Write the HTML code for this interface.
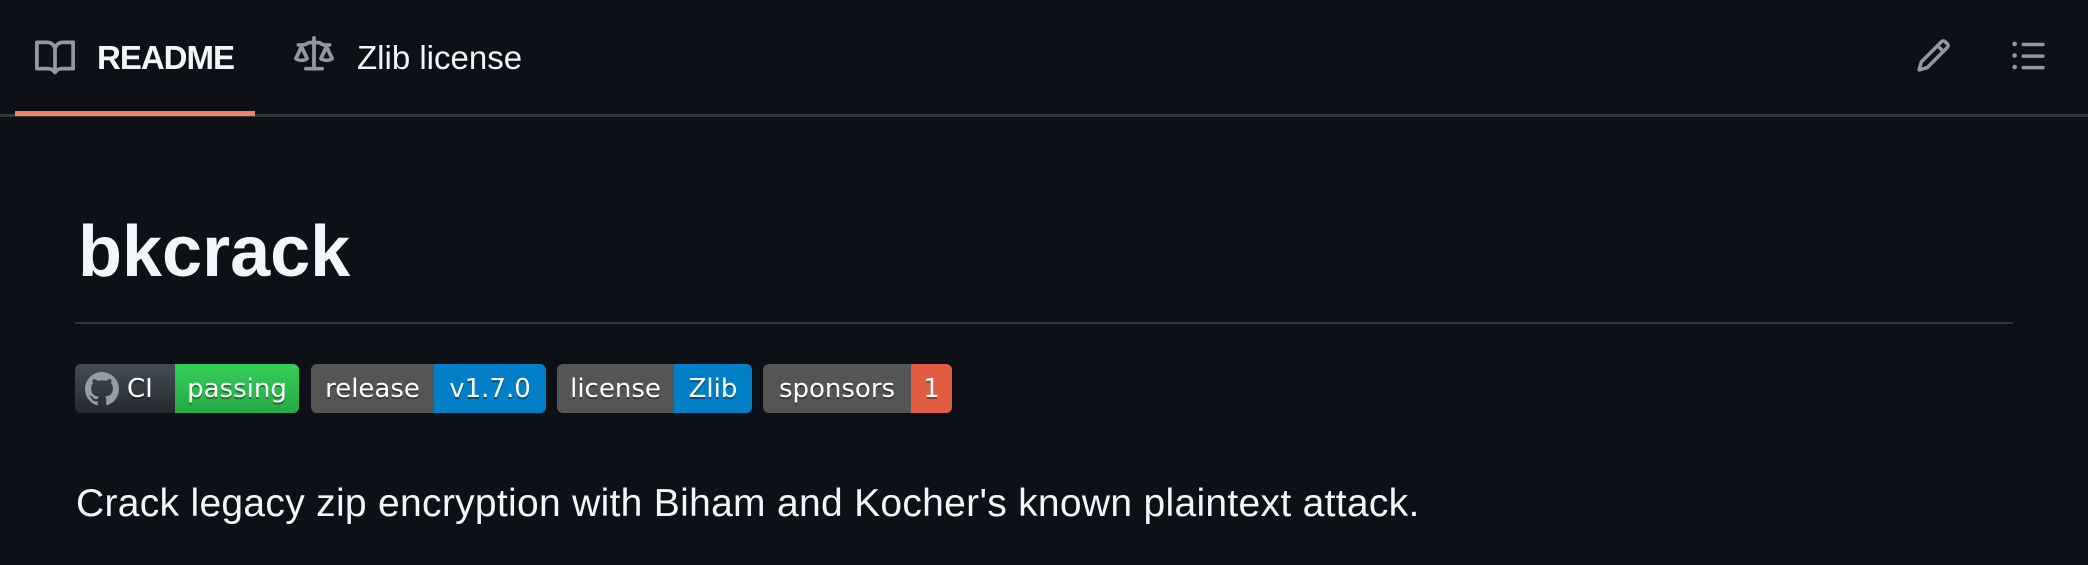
<!DOCTYPE html>
<html><head><meta charset="utf-8"><style>
*{margin:0;padding:0;box-sizing:border-box}
body{width:2088px;height:565px;background:#0d1117;overflow:hidden;position:relative;font-family:"Liberation Sans",sans-serif;color:#f0f6fc}
.a{position:absolute}
.tab{font-size:33px;top:40px;line-height:36px;white-space:nowrap}
.badge{position:absolute;top:364px;height:49px;border-radius:6px;overflow:hidden;display:flex;font-family:"DejaVu Sans",sans-serif;font-size:26px;color:#fff;text-shadow:0 2px 0 rgba(1,1,1,.35)}
.badge span{display:flex;align-items:center;justify-content:center;height:100%;white-space:nowrap}
</style></head><body>
<svg class="a" style="left:35px;top:38px" width="40" height="40" viewBox="0 0 16 16" fill="#9198a1"><path d="M0 1.75A.75.75 0 0 1 .75 1h4.253c1.227 0 2.317.59 3 1.501A3.743 3.743 0 0 1 11.006 1h4.245a.75.75 0 0 1 .75.75v10.5a.75.75 0 0 1-.75.75h-4.507a2.25 2.25 0 0 0-1.591.659l-.622.621a.75.75 0 0 1-1.06 0l-.622-.621A2.25 2.25 0 0 0 5.258 13H.75a.75.75 0 0 1-.75-.75Zm7.251 10.324.004-5.073-.002-2.253A2.25 2.25 0 0 0 5.003 2.5H1.5v9h3.757a3.75 3.75 0 0 1 1.994.574ZM8.755 4.75l-.004 7.322a3.752 3.752 0 0 1 1.992-.572H14.5v-9h-3.495a2.25 2.25 0 0 0-2.25 2.25Z"/></svg>
<div class="a tab" style="left:97px;font-weight:bold;letter-spacing:-1px">README</div>
<svg class="a" style="left:294px;top:36px" width="40" height="38" viewBox="0 0 16 16" fill="#9198a1" preserveAspectRatio="none"><path d="M8.75.75V2h.985c.304 0 .603.08.867.231l1.29.736c.038.022.08.033.124.033h2.234a.75.75 0 0 1 0 1.5h-.427l2.111 4.692a.75.75 0 0 1-.154.838l-.53-.53.529.531-.001.002-.002.002-.006.006-.006.005-.01.01-.045.04c-.21.176-.441.327-.686.45C14.556 10.780 13.880 11 13 11a4.498 4.498 0 0 1-2.023-.454 3.544 3.544 0 0 1-.686-.45l-.045-.04-.016-.015-.006-.006-.004-.004v-.001a.75.75 0 0 1-.154-.838L12.178 4.5h-.162c-.305 0-.604-.079-.868-.231l-1.290-.736a.245.245 0 0 0-.124-.033H8.75V13h2.5a.75.75 0 0 1 0 1.5h-6.5a.75.75 0 0 1 0-1.5h2.5V3.5h-.984a.245.245 0 0 0-.124.033l-1.289.737c-.265.15-.564.23-.869.23h-.162l2.112 4.692a.75.75 0 0 1-.154.838l-.53-.53.529.531-.001.002-.002.002-.006.006-.016.015-.045.04c-.21.176-.441.327-.686.45C4.556 10.780 3.880 11 3 11a4.498 4.498 0 0 1-2.023-.454 3.544 3.544 0 0 1-.686-.45l-.045-.04-.016-.015-.006-.006-.004-.004v-.001a.75.75 0 0 1-.154-.838L2.178 4.5H1.75a.75.75 0 0 1 0-1.5h2.234a.249.249 0 0 0 .125-.033l1.288-.737c.265-.15.564-.23.869-.23h.984V.75a.75.75 0 0 1 1.5 0Zm2.945 8.477c.285.135.718.273 1.305.273s1.020-.138 1.305-.273L13 6.327Zm-10 0c.285.135.718.273 1.305.273s1.020-.138 1.305-.273L3 6.327Z"/></svg>
<div class="a tab" style="left:357px">Zlib license</div>
<svg class="a" style="left:1915px;top:37px" width="37" height="37" viewBox="0 0 16 16" fill="#9198a1"><path d="M11.013 1.427a1.75 1.75 0 0 1 2.474 0l1.086 1.086a1.75 1.75 0 0 1 0 2.474l-8.61 8.61c-.21.21-.47.364-.756.445l-3.251.93a.75.75 0 0 1-.927-.928l.929-3.25c.081-.286.235-.547.445-.758l8.61-8.61Zm.176 4.823L9.75 4.81l-6.286 6.287a.253.253 0 0 0-.064.108l-.558 1.953 1.953-.558a.253.253 0 0 0 .108-.064Zm1.238-3.763a.25.25 0 0 0-.354 0L10.811 3.75l1.439 1.44 1.263-1.263a.25.25 0 0 0 0-.354Z"/></svg>
<svg class="a" style="left:2010px;top:37px" width="37" height="37" viewBox="0 0 16 16" fill="#9198a1"><path d="M5.75 2.5h8.5a.75.75 0 0 1 0 1.5h-8.5a.75.75 0 0 1 0-1.5Zm0 5h8.5a.75.75 0 0 1 0 1.5h-8.5a.75.75 0 0 1 0-1.5Zm0 5h8.5a.75.75 0 0 1 0 1.5h-8.5a.75.75 0 0 1 0-1.5ZM2 14a1 1 0 1 1 0-2 1 1 0 0 1 0 2Zm1-6a1 1 0 1 1-2 0 1 1 0 0 1 2 0ZM2 4a1 1 0 1 1 0-2 1 1 0 0 1 0 2Z"/></svg>
<div class="a" style="left:0;top:114px;width:2088px;height:3px;background:#30363d"></div>
<div class="a" style="left:15px;top:111px;width:240px;height:5px;background:#f78166"></div>
<div class="a" style="left:78px;top:212px;font-size:72px;font-weight:bold;line-height:80px">bkcrack</div>
<div class="a" style="left:75px;top:322px;width:1938px;height:2px;background:#30363d"></div>
<div class="badge" style="left:75px;width:224px"><span style="width:100px;background:linear-gradient(#444d56,#24292e);justify-content:flex-start;padding-left:10px;gap:8px"><svg width="34" height="34" viewBox="0 0 16 16" fill="#959da5"><path d="M8 0C3.58 0 0 3.58 0 8c0 3.54 2.29 6.53 5.47 7.59.4.07.55-.17.55-.38 0-.19-.01-.82-.01-1.49-2.01.37-2.530-.49-2.690-.94-.09-.23-.48-.94-.82-1.13-.28-.15-.68-.52-.01-.53.63-.01 1.08.58 1.23.82.72 1.21 1.87.87 2.33.66.07-.52.28-.87.51-1.07-1.78-.2-3.64-.89-3.64-3.95 0-.87.31-1.59.82-2.15-.08-.2-.36-1.02.08-2.12 0 0 .67-.21 2.2.82.64-.18 1.32-.27 2-.27.68 0 1.36.09 2 .27 1.53-1.04 2.2-.82 2.2-.82.44 1.1.16 1.92.08 2.12.51.56.82 1.27.82 2.150 0 3.07-1.87 3.75-3.65 3.95.29.25.54.73.54 1.48 0 1.07-.01 1.93-.01 2.2 0 .21.15.46.55.38A8.013 8.013 0 0016 8c0-4.42-3.58-8-8-8z"/></svg>CI</span><span style="width:124px;background:linear-gradient(#34d058,#28a745)">passing</span></div>
<div class="badge" style="left:311px;width:235px;background:#555"><span style="width:123px">release</span><span style="width:112px;background:#007ec6">v1.7.0</span></div>
<div class="badge" style="left:557px;width:195px;background:#555"><span style="width:117px">license</span><span style="width:78px;background:#007ec6">Zlib</span></div>
<div class="badge" style="left:763px;width:189px;background:#555"><span style="width:148px">sponsors</span><span style="width:41px;background:#e05d44">1</span></div>
<div class="a" style="left:76px;top:482px;font-size:39px;line-height:44px;white-space:nowrap;letter-spacing:0.3px">Crack legacy zip encryption with Biham and Kocher's known plaintext attack.</div>
</body></html>
